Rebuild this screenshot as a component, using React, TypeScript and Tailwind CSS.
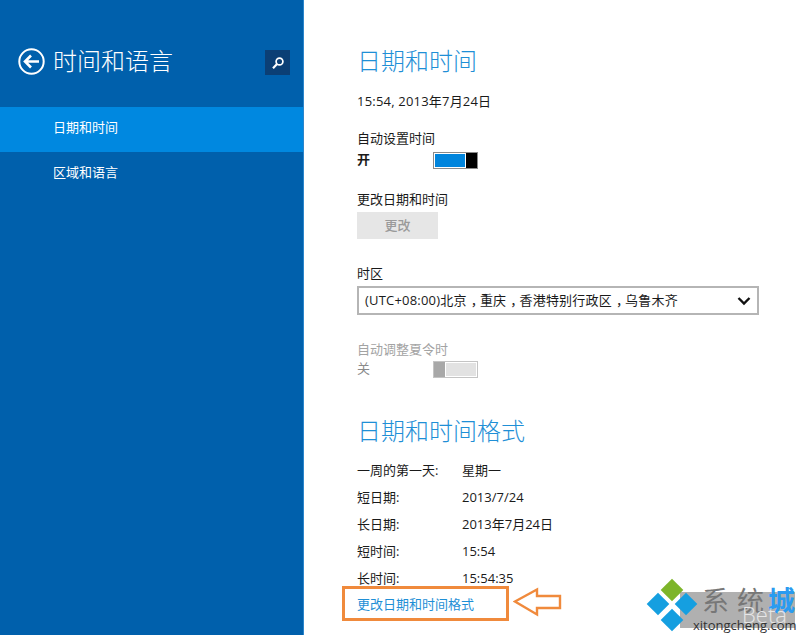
import React from "react";

const font = { fontFamily: '"Open Sans", "Noto Sans CJK SC", sans-serif' };

function Row({ label, value }: { label: string; value: string }) {
  return (
    <div className="flex h-[27px] items-center text-[13px] text-[#1a1a1a]">
      <span className="w-[105px]">{label}</span>
      <span>{value}</span>
    </div>
  );
}

function Comma() {
  return <span className="relative left-[4px]">，</span>;
}

export default function App() {
  return (
    <div className="relative flex h-[635px] w-[800px] overflow-hidden bg-white" style={font}>
      <aside className="flex w-[304px] shrink-0 flex-col border-r border-[#2b86cc] bg-[#0060ac] text-white">
        <div className="flex h-[107px] items-start pl-[18px] pr-[13px] pt-[46px]">
          <svg width="27" height="27" viewBox="0 0 27 27" fill="none" stroke="white" className="mt-[2px] shrink-0">
            <circle cx="13.5" cy="13.5" r="12.2" strokeWidth="2" />
            <path d="M21 13.5H7.5M13 7.5l-6 6 6 6" strokeWidth="2.6" />
          </svg>
          <h1 className="ml-[8px] text-[24px] leading-[30px] font-light">时间和语言</h1>
          <div className="ml-auto mt-[4px] flex h-[25px] w-[25px] items-center justify-center bg-[#0b3f75]">
            <svg width="14" height="14" viewBox="0 0 14 14" fill="none" stroke="white">
              <circle cx="8.5" cy="5.5" r="3.4" strokeWidth="1.7" />
              <path d="M6 8L2 12.2" strokeWidth="2.2" />
            </svg>
          </div>
        </div>
        <div className="flex h-[45px] items-center bg-[#0088e0] pb-[3px] pl-[53px] text-[13px]">日期和时间</div>
        <div className="flex h-[45px] items-center pb-[3px] pl-[53px] text-[13px]">区域和语言</div>
      </aside>

      <main className="flex-1 pl-[53px] pr-[41px] text-[13px] text-[#1a1a1a]">
        <h2 className="mt-[44px] text-[24px] leading-[34px] font-light text-[#1f8fd6]">日期和时间</h2>
        <p className="mt-[13px] leading-[20px] tracking-[0.2px]">15:54, 2013年7月24日</p>

        <p className="mt-[17px] leading-[20px]">自动设置时间</p>
        <div className="mt-[2px] flex h-[20px] items-center">
          <span className="w-[76px] font-bold">开</span>
          <div className="flex h-[17px] w-[45px] border border-[#8a8a8a] bg-white">
            <div className="m-[1px] flex-1 bg-[#0085dd]" />
            <div className="w-[11px] bg-black" />
          </div>
        </div>

        <p className="mt-[19px] leading-[20px]">更改日期和时间</p>
        <div className="mt-[3px] flex h-[27px] w-[81px] items-center justify-center bg-[#e6e6e6] font-medium text-[#9a9a9a]">更改</div>

        <p className="mt-[24px] leading-[20px]">时区</p>
        <div className="mt-[3px] flex h-[29px] w-[402px] items-center justify-between border-2 border-[#b5b5b5] pl-[6px] pr-[6px]">
          <span className="tracking-[0.2px]">
            (UTC+08:00)北京<Comma />重庆<Comma />香港特别行政区<Comma />乌鲁木齐
          </span>
          <svg width="14" height="10" viewBox="0 0 14 10" fill="none" stroke="#111">
            <path d="M1.5 2l5.5 5.5L12.5 2" strokeWidth="2.4" />
          </svg>
        </div>

        <p className="mt-[24px] leading-[20px] text-[#a3a3a3]">自动调整夏令时</p>
        <div className="flex h-[20px] items-center text-[#8a8a8a]">
          <span className="w-[76px]">关</span>
          <div className="flex h-[17px] w-[45px] border border-[#c4c4c4] bg-white">
            <div className="w-[11px] bg-[#a8a8a8]" />
            <div className="m-[1px] flex-1 bg-[#e2e2e2]" />
          </div>
        </div>

        <h2 className="mt-[35px] text-[24px] leading-[34px] font-light text-[#1f8fd6]">日期和时间格式</h2>

        <div className="mt-[9px]">
          <Row label="一周的第一天:" value="星期一" />
          <Row label="短日期:" value="2013/7/24" />
          <Row label="长日期:" value="2013年7月24日" />
          <Row label="短时间:" value="15:54" />
          <Row label="长时间:" value="15:54:35" />
        </div>
        <p className="mt-[2px] leading-[20px] text-[#1f8fd6]">更改日期和时间格式</p>
      </main>

      {/* Annotation over the page */}
      <div className="absolute left-[342px] top-[586px] h-[35px] w-[167px] border-[3px] border-[#f08a3c]" />
      <svg className="absolute left-[513px] top-[587px]" width="50" height="30" viewBox="0 0 50 30" fill="#fff" stroke="#f08a3c" strokeWidth="2.4">
        <path d="M2 14.5L24 2.5v6.5h23v12H24v6.5z" />
      </svg>

      {/* Watermark */}
      <div className="absolute left-[647px] top-[580px] h-[55px] w-[153px]">
        <div className="absolute left-[33px] top-[12px] h-[36px] w-[115px] bg-[#b0b0b0]" />
        <div className="absolute left-[17px] top-[2px] h-[16px] w-[16px] rotate-45 bg-[#7db52a]" />
        <div className="absolute left-[3px] top-[16px] h-[16px] w-[16px] rotate-45 bg-[#159fe0]" />
        <div className="absolute left-[31px] top-[16px] h-[16px] w-[16px] rotate-45 bg-[#159fe0]" />
        <div className="absolute left-[17px] top-[32px] h-[16px] w-[16px] rotate-45 bg-[#159fe0]" />
        <span className="absolute left-[55px] top-[1px] text-[27px] leading-[40px] text-[#777777]">系</span>
        <span className="absolute left-[90px] top-[1px] text-[27px] leading-[40px] text-[#777777]">统</span>
        <span className="absolute left-[121px] top-[1px] text-[27px] leading-[40px] font-bold text-[#2a9bf0]">城</span>
        <span className="absolute left-[95px] top-[21px] text-[22px] leading-[26px] font-light text-[#e6e6e6]">Beta</span>
        <span className="absolute left-[46px] top-[36px] text-[13px] leading-[18px] text-[#333]">xitongcheng.com</span>
      </div>
    </div>
  );
}
